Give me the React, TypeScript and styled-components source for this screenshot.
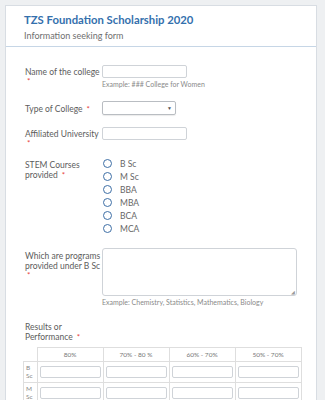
import styled, { createGlobalStyle } from "styled-components";

const GlobalStyle = createGlobalStyle`
  html, body {
    margin: 0;
    padding: 0;
    background: #eef0f2;
    font-family: "Lato", "Noto Sans", sans-serif;
  }
`;

const Page = styled.div`
  padding: 5px 8px 0 5px;
  height: 400px;
  overflow: hidden;
  box-sizing: border-box;
`;

const Card = styled.div`
  background: #fff;
  border: 1px solid #d8dde3;
  border-bottom: none;
  min-height: 420px;
`;

const Header = styled.div`
  padding: 5px 18px 4px;
  border-bottom: 1px solid #c6d6e6;
`;

const Title = styled.h1`
  margin: 0;
  font-size: 11.3px;
  line-height: 17px;
  font-weight: 700;
  color: #3470ad;
`;

const Subtitle = styled.div`
  margin-top: 2px;
  font-size: 9px;
  line-height: 12px;
  color: #6f6f6f;
`;

const Body = styled.div`
  padding: 18px 0 0 19px;
`;

const Row = styled.div<{ $gap: number }>`
  display: flex;
  align-items: flex-start;
  margin-bottom: ${({ $gap }) => $gap}px;
`;

const Label = styled.div<{ $top?: number }>`
  width: 77px;
  flex-shrink: 0;
  font-size: 8.5px;
  line-height: 10px;
  color: #5c5c5c;
  padding-top: ${({ $top }) => $top ?? 2}px;
`;

const Star = styled.span`
  color: #e8413c;
  margin-left: 4px;
  font-size: 8px;
`;

const StarLine = styled.div`
  color: #e8413c;
  font-size: 8px;
  line-height: 8px;
  padding-left: 2px;
`;

const Field = styled.div`
  display: flex;
  flex-direction: column;
`;

const TextInput = styled.div<{ $w: number }>`
  width: ${({ $w }) => $w}px;
  height: 13px;
  border: 1px solid #cfd3d8;
  border-radius: 2px;
  box-sizing: border-box;
  background: #fff;
`;

const Hint = styled.div`
  font-size: 7px;
  line-height: 9px;
  color: #8a8a8a;
  margin-top: 2px;
`;

const Select = styled.div`
  width: 74px;
  height: 14px;
  border: 1px solid #b9bdc2;
  border-radius: 2px;
  box-sizing: border-box;
  display: flex;
  align-items: center;
  justify-content: flex-end;
  padding-right: 3px;
  font-size: 5px;
  color: #555;
  box-shadow: 0 1px 1px rgba(0, 0, 0, 0.08);
`;

const Radios = styled.div`
  display: flex;
  flex-direction: column;
  gap: 4px;
  padding-left: 1px;
`;

const RadioItem = styled.div`
  display: flex;
  align-items: center;
  height: 9px;
  font-size: 8.5px;
  color: #666;
`;

const Circle = styled.span`
  width: 9px;
  height: 9px;
  box-sizing: border-box;
  border: 1.5px solid #3e6fa6;
  border-radius: 50%;
  margin-right: 8px;
`;

const TextArea = styled.div`
  position: relative;
  width: 195px;
  height: 48px;
  border: 1px solid #cfd3d8;
  border-radius: 3px;
  box-sizing: border-box;
`;

const Grip = styled.span`
  position: absolute;
  right: 1px;
  bottom: 0px;
  font-size: 5px;
  line-height: 5px;
  color: #999;
`;

const Table = styled.table`
  border-collapse: collapse;
  margin-left: -2px;
  margin-top: 5px;
  table-layout: fixed;
`;

const Th = styled.th`
  width: 65px;
  height: 13px;
  border: 1px solid #dedede;
  font-size: 6.5px;
  font-weight: 400;
  color: #777;
  padding: 0;
`;

const Corner = styled.th`
  width: 13px;
  border: none;
  border-right: 1px solid #dedede;
  border-bottom: 1px solid #dedede;
  padding: 0;
`;

const RowHead = styled.td`
  border: 1px solid #dedede;
  font-size: 6.5px;
  line-height: 7.5px;
  color: #888;
  padding: 2px 1px 1px 2px;
  vertical-align: top;
`;

const Td = styled.td`
  border: 1px solid #dedede;
  padding: 4px 2px 4px 2px;
`;

const CellInput = styled.div`
  height: 12px;
  border: 1px solid #cfd3d8;
  border-radius: 2px;
  box-sizing: border-box;
`;

const courses = ["B Sc", "M Sc", "BBA", "MBA", "BCA", "MCA"];
const ranges = ["80%", "70% - 80 %", "60% - 70%", "50% - 70%"];
const rows = ["B Sc", "M Sc"];

export default function App() {
  return (
    <>
      <GlobalStyle />
      <Page>
        <Card>
          <Header>
            <Title>TZS Foundation Scholarship 2020</Title>
            <Subtitle>Information seeking form</Subtitle>
          </Header>
          <Body>
            <Row $gap={12}>
              <Label>
                Name of the college
                <StarLine>*</StarLine>
              </Label>
              <Field>
                <TextInput $w={85} />
                <Hint>Example: ### College for Women</Hint>
              </Field>
            </Row>
            <Row $gap={12}>
              <Label $top={3}>
                Type of College<Star>*</Star>
              </Label>
              <Select>▼</Select>
            </Row>
            <Row $gap={12}>
              <Label>
                Affiliated University
                <StarLine>*</StarLine>
              </Label>
              <TextInput $w={85} />
            </Row>
            <Row $gap={15}>
              <Label $top={1}>
                STEM Courses provided<Star>*</Star>
              </Label>
              <Radios>
                {courses.map(c => (
                  <RadioItem key={c}>
                    <Circle />
                    {c}
                  </RadioItem>
                ))}
              </Radios>
            </Row>
            <Row $gap={15}>
              <Label $top={3}>
                Which are programs provided under B Sc
                <StarLine>*</StarLine>
              </Label>
              <Field>
                <TextArea>
                  <Grip>◢</Grip>
                </TextArea>
                <Hint>Example: Chemistry, Statistics, Mathematics, Biology</Hint>
              </Field>
            </Row>
            <Label $top={0}>
              Results or Performance<Star>*</Star>
            </Label>
            <Table>
              <thead>
                <tr>
                  <Corner />
                  {ranges.map(r => (
                    <Th key={r}>{r}</Th>
                  ))}
                </tr>
              </thead>
              <tbody>
                {rows.map(r => (
                  <tr key={r}>
                    <RowHead>{r}</RowHead>
                    {ranges.map(c => (
                      <Td key={c}>
                        <CellInput />
                      </Td>
                    ))}
                  </tr>
                ))}
              </tbody>
            </Table>
          </Body>
        </Card>
      </Page>
    </>
  );
}
